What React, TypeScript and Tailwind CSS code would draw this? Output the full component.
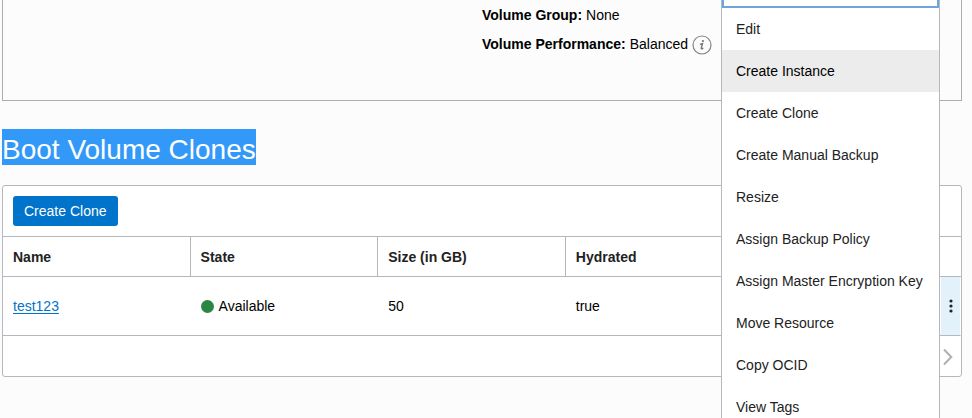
import React from "react";

const menuItems = [
  "Edit",
  "Create Instance",
  "Create Clone",
  "Create Manual Backup",
  "Resize",
  "Assign Backup Policy",
  "Assign Master Encryption Key",
  "Move Resource",
  "Copy OCID",
  "View Tags",
];

const columns = ["Name", "State", "Size (in GB)", "Hydrated"];

function InfoIcon() {
  return (
    <svg width="20" height="20" viewBox="0 0 20 20" aria-hidden="true">
      <circle cx="10" cy="10" r="9" fill="none" stroke="#858585" strokeWidth="1.2" />
      <circle cx="10.9" cy="6" r="1.1" fill="#777" />
      <path d="M8 9.3 L10.5 8.6 L9.3 13 Q9.1 14.2 10.1 13.8 L11.3 13" fill="none" stroke="#777" strokeWidth="1.4" />
    </svg>
  );
}

function VolumeDetails() {
  return (
    <section className="h-[101px] border border-t-0 border-[#adadad] text-sm text-black">
      <dl className="ml-[50%] pt-px leading-[29px]">
        <div className="flex gap-1">
          <dt className="font-bold">Volume Group:</dt>
          <dd>None</dd>
        </div>
        <div className="flex gap-1">
          <dt className="font-bold">Volume Performance:</dt>
          <dd className="flex items-center gap-1">
            Balanced
            <button type="button" aria-label="About volume performance">
              <InfoIcon />
            </button>
          </dd>
        </div>
      </dl>
    </section>
  );
}

function ClonesTable() {
  return (
    <section className="mt-5 rounded-[3px] border border-[#b2b8be] bg-white">
      <div className="flex h-[50px] items-center px-[10px]">
        <button type="button" className="h-[30px] rounded-[3px] bg-[#0073ca] px-[11px] text-sm text-white">
          Create Clone
        </button>
      </div>
      <table className="w-full table-fixed border-separate border-spacing-0 text-left text-sm text-black">
        <colgroup>
          <col />
          <col />
          <col />
          <col />
          <col />
          <col className="w-5" />
        </colgroup>
        <thead>
          <tr className="h-[41px] text-[#222]">
            {columns.map((name) => (
              <th key={name} scope="col" className="border-y border-r border-[#b2b8be] px-[10px] font-bold">
                {name}
              </th>
            ))}
            <td colSpan={2} className="border-y border-[#b2b8be]" />
          </tr>
        </thead>
        <tbody>
          <tr className="h-[59px]">
            <td className="border-b border-[#b2b8be] px-[10px]">
              <a href="#test123" className="text-[#0073ca] underline underline-offset-2">
                test123
              </a>
            </td>
            <td className="border-b border-[#b2b8be] px-[10px]">
              <span className="flex items-center gap-[5px]">
                <span className="size-[13px] rounded-full bg-[#2b8643]" />
                Available
              </span>
            </td>
            <td className="border-b border-[#b2b8be] px-[10px]">50</td>
            <td className="border-b border-[#b2b8be] px-[10px]">true</td>
            <td className="border-b border-[#b2b8be] px-[10px]" />
            <td className="border-r border-b border-r-white border-b-[#b2b8be] bg-[#e3f1fb]">
              <button type="button" aria-label="Row actions" className="flex w-full justify-center">
                <svg width="4" height="14" viewBox="0 0 4 14" fill="#222">
                  <circle cx="2" cy="2" r="1.6" />
                  <circle cx="2" cy="7" r="1.6" />
                  <circle cx="2" cy="12" r="1.6" />
                </svg>
              </button>
            </td>
          </tr>
        </tbody>
      </table>
      <div className="flex h-10 items-center justify-end pt-0.5 pr-2">
        <button type="button" aria-label="Next page">
          <svg width="11" height="18" viewBox="0 0 11 18" fill="none" stroke="#b0b0b0" strokeWidth="2">
            <path d="M2 1.5 L9.3 9 L2 16.5" />
          </svg>
        </button>
      </div>
    </section>
  );
}

function ActionsMenu() {
  return (
    <div className="absolute -top-8 right-8 w-[219px] border border-[#b2b8be] bg-white text-sm text-[#222]">
      <input
        type="text"
        aria-label="Filter actions"
        className="block h-[39px] w-full border-2 border-[#6fa5dc] bg-white px-3 outline-none"
      />
      <ul>
        {menuItems.map((item) => (
          <li key={item}>
            <button
              type="button"
              className={
                item === "Create Instance"
                  ? "h-[42px] w-full bg-[#ececec] px-[14px] text-left whitespace-nowrap text-black"
                  : "h-[42px] w-full px-[14px] text-left whitespace-nowrap"
              }
            >
              {item}
            </button>
          </li>
        ))}
      </ul>
    </div>
  );
}

export default function App() {
  return (
    <div className="relative h-screen overflow-hidden bg-[#fcfcfc] pr-[10px] pl-[2px] font-['Helvetica_Neue','Liberation_Sans',Arial,sans-serif]">
      <VolumeDetails />
      <h2 className="mt-7 w-fit bg-[#3399f8] pt-1.5 text-[28px] leading-[30px] text-white">Boot Volume Clones</h2>
      <ClonesTable />
      <ActionsMenu />
    </div>
  );
}
